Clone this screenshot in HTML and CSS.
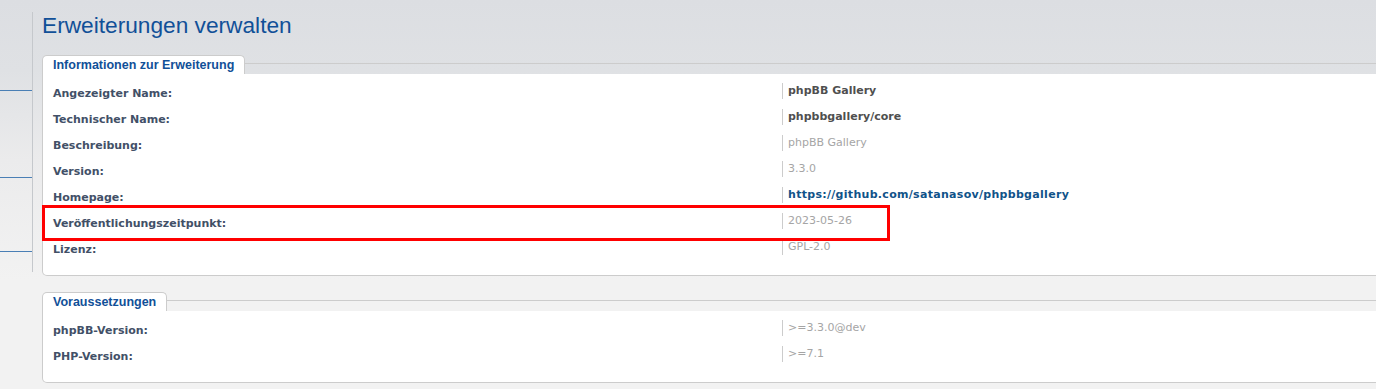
FILE: index.html
```html
<!DOCTYPE html>
<html lang="de">
<head>
  <meta charset="UTF-8">
  <title>Erweiterungen verwalten</title>
  <link rel="stylesheet" href="styles.css">
</head>
<body>
  <div class="wrap">
    <div class="sidebar">
      <div class="menu-block first"></div>
      <div class="menu-block second"></div>
      <div class="menu-block third"></div>
    </div>

    <div class="main">
      <h1>Erweiterungen verwalten</h1>

      <div class="panel">
        <div class="panel-head">
          <div class="legend">Informationen zur Erweiterung</div>
          <div class="legend-fill"></div>
        </div>
        <div class="panel-body">
          <dl>
            <dt>Angezeigter Name:</dt>
            <dd class="strong">phpBB Gallery</dd>
          </dl>
          <dl>
            <dt>Technischer Name:</dt>
            <dd class="strong">phpbbgallery/core</dd>
          </dl>
          <dl>
            <dt>Beschreibung:</dt>
            <dd>phpBB Gallery</dd>
          </dl>
          <dl>
            <dt>Version:</dt>
            <dd>3.3.0</dd>
          </dl>
          <dl>
            <dt>Homepage:</dt>
            <dd class="link"><a href="#">https://github.com/satanasov/phpbbgallery</a></dd>
          </dl>
          <dl>
            <dt>Veröffentlichungszeitpunkt:</dt>
            <dd>2023-05-26</dd>
          </dl>
          <dl>
            <dt>Lizenz:</dt>
            <dd>GPL-2.0</dd>
          </dl>
        </div>
      </div>

      <div class="panel">
        <div class="panel-head">
          <div class="legend">Voraussetzungen</div>
          <div class="legend-fill"></div>
        </div>
        <div class="panel-body">
          <dl>
            <dt>phpBB-Version:</dt>
            <dd>&gt;=3.3.0@dev</dd>
          </dl>
          <dl>
            <dt>PHP-Version:</dt>
            <dd>&gt;=7.1</dd>
          </dl>
        </div>
      </div>
    </div>
  </div>

  <div class="highlight"></div>
</body>
</html>
```

FILE: styles.css
```css
body {
  margin: 0;
  padding: 0;
  font-family: "DejaVu Sans", Verdana, sans-serif;
  font-size: 11px;
  background: linear-gradient(to bottom, #dcdee2 0px, #dfe1e4 70px, #ebebec 160px, #f2f2f2 280px);
  background-color: #f2f2f2;
  min-height: 389px;
  overflow: hidden;
}

.wrap {
  display: flex;
  align-items: flex-start;
}

/* left menu remains */
.sidebar {
  width: 32px;
  margin-top: 12px;
  border-right: 1px solid #c5c8cc;
  flex-shrink: 0;
}

.menu-block {
  border-bottom: 1px solid #4a7fb5;
}

.menu-block.first {
  height: 78px;
}

.menu-block.second {
  height: 86px;
}

.menu-block.third {
  height: 73px;
}

.sidebar::after {
  content: "";
  display: block;
  height: 20px;
}

.main {
  margin-left: 9px;
  width: 1420px;
  flex-shrink: 0;
}

h1 {
  margin: 12px 0 0 0;
  font-family: "Liberation Sans", Arial, sans-serif;
  font-size: 22.7px;
  font-weight: normal;
  line-height: 26px;
  color: #115098;
}

.panel {
  margin-top: 17px;
}

.panel + .panel {
  margin-top: 16px;
}

.panel-head {
  display: flex;
  align-items: flex-start;
}

.legend {
  background: #fff;
  border: 1px solid #ccc;
  border-bottom: none;
  border-radius: 5px 5px 0 0;
  padding: 0 10px 0 10px;
  height: 18px;
  line-height: 19px;
  font-family: "Liberation Sans", Arial, sans-serif;
  font-size: 12.5px;
  font-weight: bold;
  color: #115098;
}

.legend-fill {
  flex: 1;
  height: 8px;
  border-bottom: 1px solid #ccc;
}

.panel-body {
  background: #fff;
  border: 1px solid #ccc;
  border-top: none;
  border-radius: 0 0 5px 5px;
  padding: 6px 10px 13px 10px;
}

dl {
  display: flex;
  align-items: center;
  height: 26px;
  margin: 0;
}

dt {
  width: 729px;
  font-weight: bold;
  color: #425067;
}

dd {
  margin: 0 0 5px 0;
  border-left: 1px solid #ccc;
  padding-left: 5px;
  line-height: 16px;
  color: #a5a5a5;
}

dd.strong {
  font-weight: bold;
  color: #4f4f4f;
}

dd.link a {
  font-weight: bold;
  letter-spacing: 0.3px;
  color: #105289;
  text-decoration: none;
}

/* annotation box drawn over the screenshot */
.highlight {
  position: absolute;
  left: 42px;
  top: 205px;
  width: 842px;
  height: 30px;
  border: 3px solid #f00;
}
```
